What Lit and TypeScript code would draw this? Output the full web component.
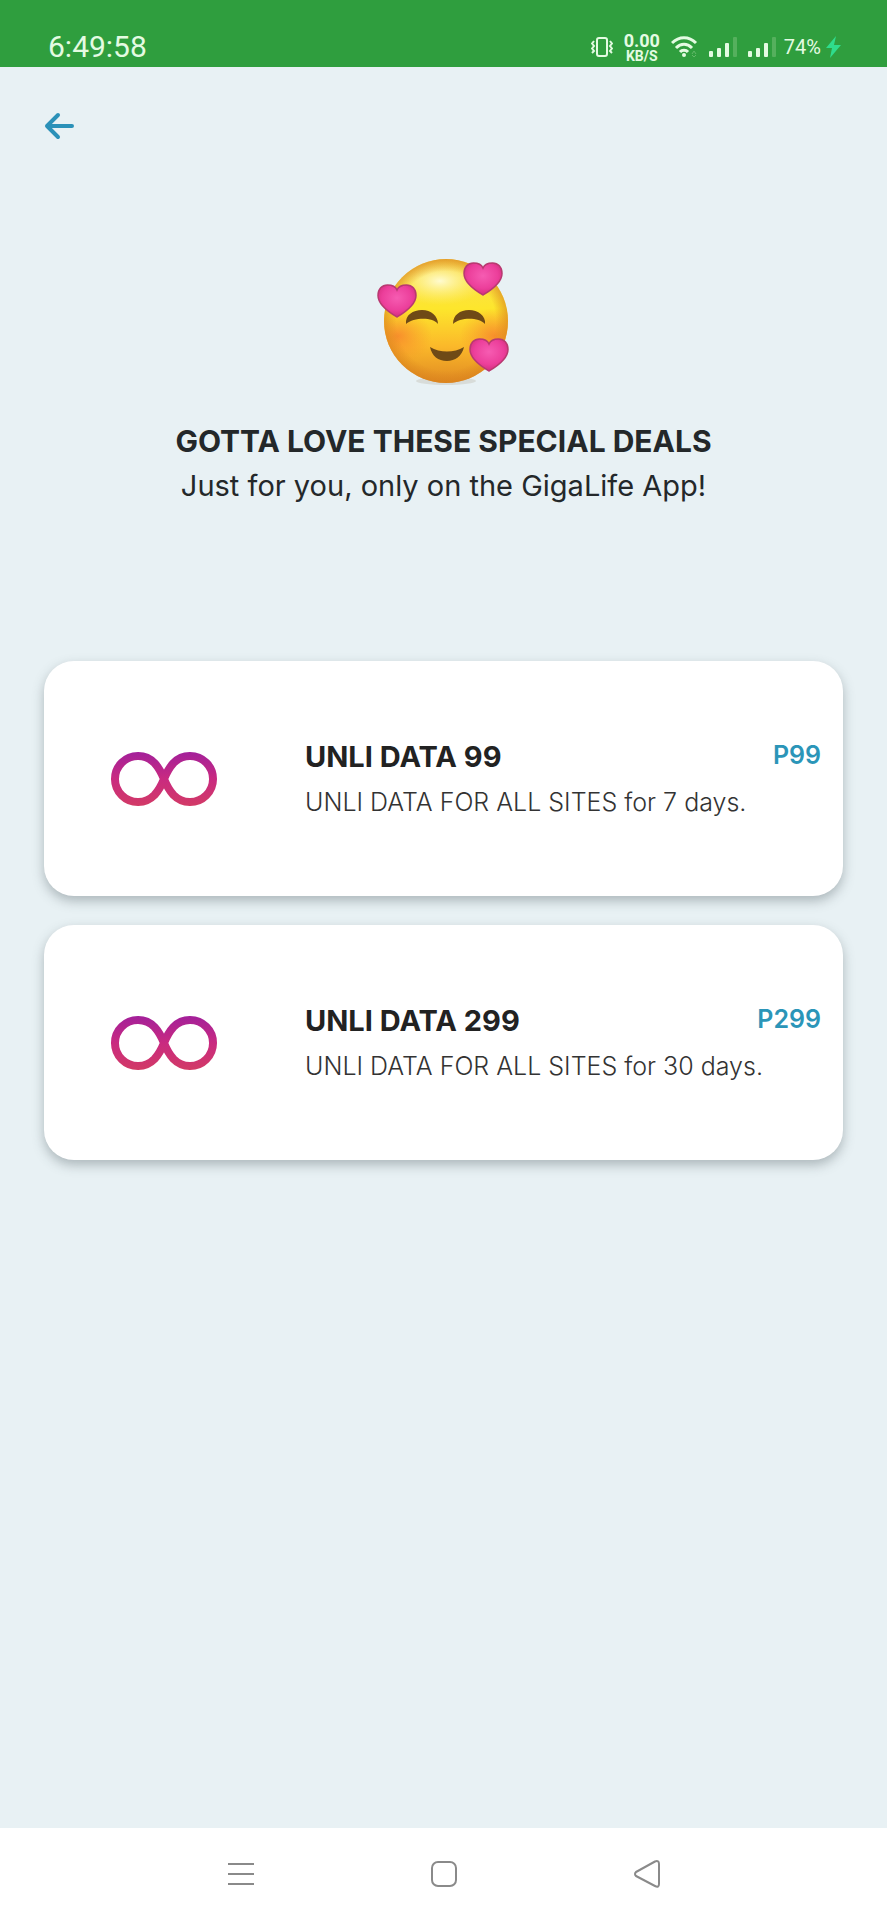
import { LitElement, html, css, svg } from 'lit';
import { customElement, property } from 'lit/decorators.js';

interface Deal {
  name: string;
  description: string;
  price: string;
}

const DEALS: Deal[] = [
  { name: 'UNLI DATA 99', description: 'UNLI DATA FOR ALL SITES for 7 days.', price: 'P99' },
  { name: 'UNLI DATA 299', description: 'UNLI DATA FOR ALL SITES for 30 days.', price: 'P299' },
];

const HEART = 'M19 32C14 29 0 21 0 10.500C0 4 4 0 9.500 0C14 0 17.500 1.500 19 5C20.500 1.500 24 0 28.500 0C34 0 38 4 38 10.500C38 21 24 29 19 32Z';

@customElement('status-bar')
export class StatusBar extends LitElement {
  static styles = css`
    :host {
      display: flex;
      justify-content: space-between;
      align-items: center;
      box-sizing: border-box;
      height: 67px;
      padding: 26px 46px 0 48px;
      background: #2f9e3e;
      color: #e4fbe2;
      font-family: Roboto, sans-serif;
    }

    .time {
      font-size: 30px;
      line-height: 36px;
    }

    .icons {
      display: flex;
      align-items: center;
      gap: 11px;
    }

    .speed {
      display: flex;
      flex-direction: column;
      align-items: center;
      font-size: 18px;
      font-weight: 700;
      line-height: 18px;
    }

    .speed small {
      font-size: 14px;
      line-height: 12px;
    }

    .battery {
      display: flex;
      align-items: center;
      gap: 5px;
      margin-left: -3px;
      font-size: 20px;
    }

    svg {
      display: block;
    }
  `;

  signal() {
    return html`
      <svg width="28" height="22" viewBox="0 0 28 22" aria-hidden="true">
        <g fill="#e4fbe2">
          <rect x="0" y="15" width="4" height="6" rx="1" />
          <rect x="8" y="12" width="4" height="9" rx="1" />
          <rect x="16" y="7" width="4" height="14" rx="1" />
        </g>
        <rect x="24" y="1" width="4" height="20" rx="1" fill="#55b05d" />
      </svg>
    `;
  }

  render() {
    return html`
      <span class="time">6:49:58</span>
      <div class="icons">
        <svg width="22" height="22" viewBox="0 0 22 22" fill="none" stroke="#e4fbe2" stroke-width="2" aria-hidden="true">
          <rect x="6" y="2" width="10" height="18" rx="2" />
          <path d="M3 5L1 7.500L3 10L1 12.500L3 15L1 17M19 5L21 7.500L19 10L21 12.500L19 15L21 17" />
        </svg>
        <span class="speed">0.00<small>KB/S</small></span>
        <svg width="27" height="22" viewBox="0 0 27 22" fill="none" stroke="#e4fbe2" stroke-width="3" aria-hidden="true">
          <path d="M1 7C8 0 18 0 25 7" />
          <path d="M5 12C10 7 16 7 21 12" />
          <path d="M9 16C11 13.500 15 13.500 17 16" />
          <circle cx="13" cy="19" r="2" fill="#e4fbe2" stroke="none" />
          <path d="M21 18L23 15L25 18M21 19L23 21L25 19" stroke="#62b968" stroke-width="1" />
        </svg>
        ${this.signal()} ${this.signal()}
        <span class="battery">
          74%
          <svg width="15" height="22" viewBox="0 0 15 22" aria-hidden="true">
            <path d="M10 0L0 12H6L4 22L15 9H8Z" fill="#2fdc8c" />
          </svg>
        </span>
      </div>
    `;
  }
}

@customElement('love-face')
export class LoveFace extends LitElement {
  static styles = css`
    :host,
    svg {
      display: block;
    }
  `;

  heart(x: number, y: number) {
    return svg`
      <path d=${HEART} transform="translate(${x} ${y})"
        fill="url(#heart)" stroke="#b83a70" stroke-width="1.500" />
    `;
  }

  render() {
    return html`
      <svg width="134" height="130" viewBox="1 0 134 130" role="img" aria-label="Smiling face with hearts">
        <defs>
          <linearGradient id="face" x1="0" y1="0" x2="0" y2="1">
            <stop offset="0" stop-color="#f6c93a" />
            <stop offset="0.150" stop-color="#fbe04a" />
            <stop offset="0.400" stop-color="#fde62c" />
            <stop offset="0.700" stop-color="#fbb92a" />
            <stop offset="1" stop-color="#e08a22" />
          </linearGradient>
          <radialGradient id="rim">
            <stop offset="0.800" stop-color="#d8801c" stop-opacity="0" />
            <stop offset="1" stop-color="#d8801c" stop-opacity="0.600" />
          </radialGradient>
          <radialGradient id="shine">
            <stop offset="0" stop-color="#fffbd0" />
            <stop offset="1" stop-color="#fff27a" stop-opacity="0" />
          </radialGradient>
          <radialGradient id="blush">
            <stop offset="0" stop-color="#f7822c" stop-opacity="0.800" />
            <stop offset="1" stop-color="#f7932c" stop-opacity="0" />
          </radialGradient>
          <radialGradient id="heart" cx="0.500" cy="0.400" r="0.650">
            <stop offset="0" stop-color="#f65cb2" />
            <stop offset="0.600" stop-color="#ec3f9b" />
            <stop offset="1" stop-color="#cf2877" />
          </radialGradient>
          <clipPath id="head"><circle cx="70" cy="64" r="62" /></clipPath>
        </defs>
        <ellipse cx="70" cy="124" rx="30" ry="4" fill="#9c8a70" opacity="0.200" />
        <circle cx="70" cy="64" r="62" fill="url(#face)" />
        <g clip-path="url(#head)">
          <ellipse cx="64" cy="24" rx="46" ry="24" fill="url(#shine)" />
          <ellipse cx="22" cy="79" rx="34" ry="28" fill="url(#blush)" />
          <ellipse cx="118" cy="79" rx="34" ry="28" fill="url(#blush)" />
        </g>
        <circle cx="70" cy="64" r="62" fill="url(#rim)" />
        <g fill="#6f4a16">
          <path d="M30 67C29 58 37 53 46 53C55 53 62 59 62 67C57 60 38 60 30 67Z" />
          <path d="M77 67C77 58 84 53 93 53C102 53 110 59 109 67C103 60 84 60 77 67Z" />
          <path d="M54 90C64 96 78 96 88 90C86 99 79 104 71 104C62 104 56 99 54 90Z" />
        </g>
        ${this.heart(2, 28)} ${this.heart(88, 6)} ${this.heart(94, 82)}
      </svg>
    `;
  }
}

@customElement('deal-card')
export class DealCard extends LitElement {
  @property({ attribute: false }) deal!: Deal;

  static styles = css`
    :host {
      display: block;
    }

    .card {
      display: grid;
      grid-template-columns: 240px 1fr auto;
      align-content: center;
      column-gap: 21px;
      width: 100%;
      min-height: 235px;
      padding: 0 22px 0 0;
      border: 0;
      border-radius: 30px;
      background: #ffffff;
      box-shadow: 0 5px 12px rgba(60, 75, 80, 0.35);
      color: #222222;
      font-family: Inter, sans-serif;
      text-align: left;
      cursor: pointer;
    }

    .icon {
      grid-row: 1 / 3;
      place-self: center;
      overflow: visible;
    }

    .name {
      font-size: 29px;
      font-weight: 700;
      line-height: 46px;
    }

    .price {
      color: #2b95b8;
      font-size: 25px;
      font-weight: 600;
      line-height: 42px;
    }

    .description {
      grid-column: 2 / 4;
      color: #333333;
      font-size: 25px;
      font-weight: 300;
      line-height: 44px;
    }
  `;

  render() {
    return html`
      <button class="card" type="button">
        <svg class="icon" width="106" height="54" viewBox="0 0 106 54" fill="none" aria-hidden="true">
          <defs>
            <linearGradient id="loop" gradientUnits="userSpaceOnUse" x1="0" y1="0" x2="0" y2="54">
              <stop offset="0" stop-color="#a3209a" />
              <stop offset="0.500" stop-color="#c92a80" />
              <stop offset="1" stop-color="#d23a66" />
            </linearGradient>
          </defs>
          <path
            d="M53 27Q49 37 43.500 43A23 23 0 1 1 43.500 11Q49 17 53 27Q57 37 62.500 43A23 23 0 1 0 62.500 11Q57 17 53 27Z"
            stroke="url(#loop)" stroke-width="8" />
        </svg>
        <span class="name">${this.deal.name}</span>
        <span class="price">${this.deal.price}</span>
        <span class="description">${this.deal.description}</span>
      </button>
    `;
  }
}

@customElement('app-root')
export class AppRoot extends LitElement {
  static styles = css`
    :host {
      display: flex;
      flex-direction: column;
      min-height: 100vh;
      background: #e8f1f4;
      color: #24282a;
      font-family: Inter, sans-serif;
    }

    button {
      display: block;
      padding: 0;
      border: 0;
      background: none;
      cursor: pointer;
    }

    svg {
      display: block;
    }

    main {
      flex: 1;
      padding: 44px 44px 0;
    }

    .hero {
      display: flex;
      flex-direction: column;
      align-items: center;
      padding: 116px 0 152px;
      text-align: center;
    }

    h1 {
      margin: 32px 0 0;
      font-size: 30px;
      font-weight: 700;
      line-height: 44px;
    }

    p {
      margin: 0;
      font-size: 29px;
      line-height: 46px;
    }

    .deals {
      display: flex;
      flex-direction: column;
      gap: 29px;
      margin: 0;
      padding: 0;
      list-style: none;
    }

    nav {
      display: flex;
      justify-content: center;
      align-items: center;
      gap: 177px;
      height: 92px;
      background: #ffffff;
    }
  `;

  render() {
    return html`
      <status-bar></status-bar>
      <main>
        <button type="button" aria-label="Back">
          <svg width="30" height="30" viewBox="0 0 30 30" fill="none" stroke="#2b91b8" stroke-width="4"
            stroke-linecap="round" stroke-linejoin="round">
            <path d="M28 15H3M14 4L3 15L14 26" />
          </svg>
        </button>
        <section class="hero">
          <love-face></love-face>
          <h1>GOTTA LOVE THESE SPECIAL DEALS</h1>
          <p>Just for you, only on the GigaLife App!</p>
        </section>
        <ul class="deals">
          ${DEALS.map((deal) => html`<li><deal-card .deal=${deal}></deal-card></li>`)}
        </ul>
      </main>
      <nav>
        <button type="button" aria-label="Recent apps">
          <svg width="26" height="28" viewBox="0 0 26 28" stroke="#8a8a8a" stroke-width="2">
            <path d="M0 4H26M0 14H26M0 24H26" />
          </svg>
        </button>
        <button type="button" aria-label="Home">
          <svg width="26" height="28" viewBox="0 0 26 28" fill="none" stroke="#8a8a8a" stroke-width="2">
            <rect x="1" y="2" width="24" height="24" rx="6" />
          </svg>
        </button>
        <button type="button" aria-label="Back">
          <svg width="26" height="28" viewBox="0 0 26 28" fill="none" stroke="#8a8a8a" stroke-width="2"
            stroke-linejoin="round">
            <path d="M2 12L21 1.500Q25 0 25 4V24Q25 28 21 26L2 16Q0 14 2 12Z" />
          </svg>
        </button>
      </nav>
    `;
  }
}
